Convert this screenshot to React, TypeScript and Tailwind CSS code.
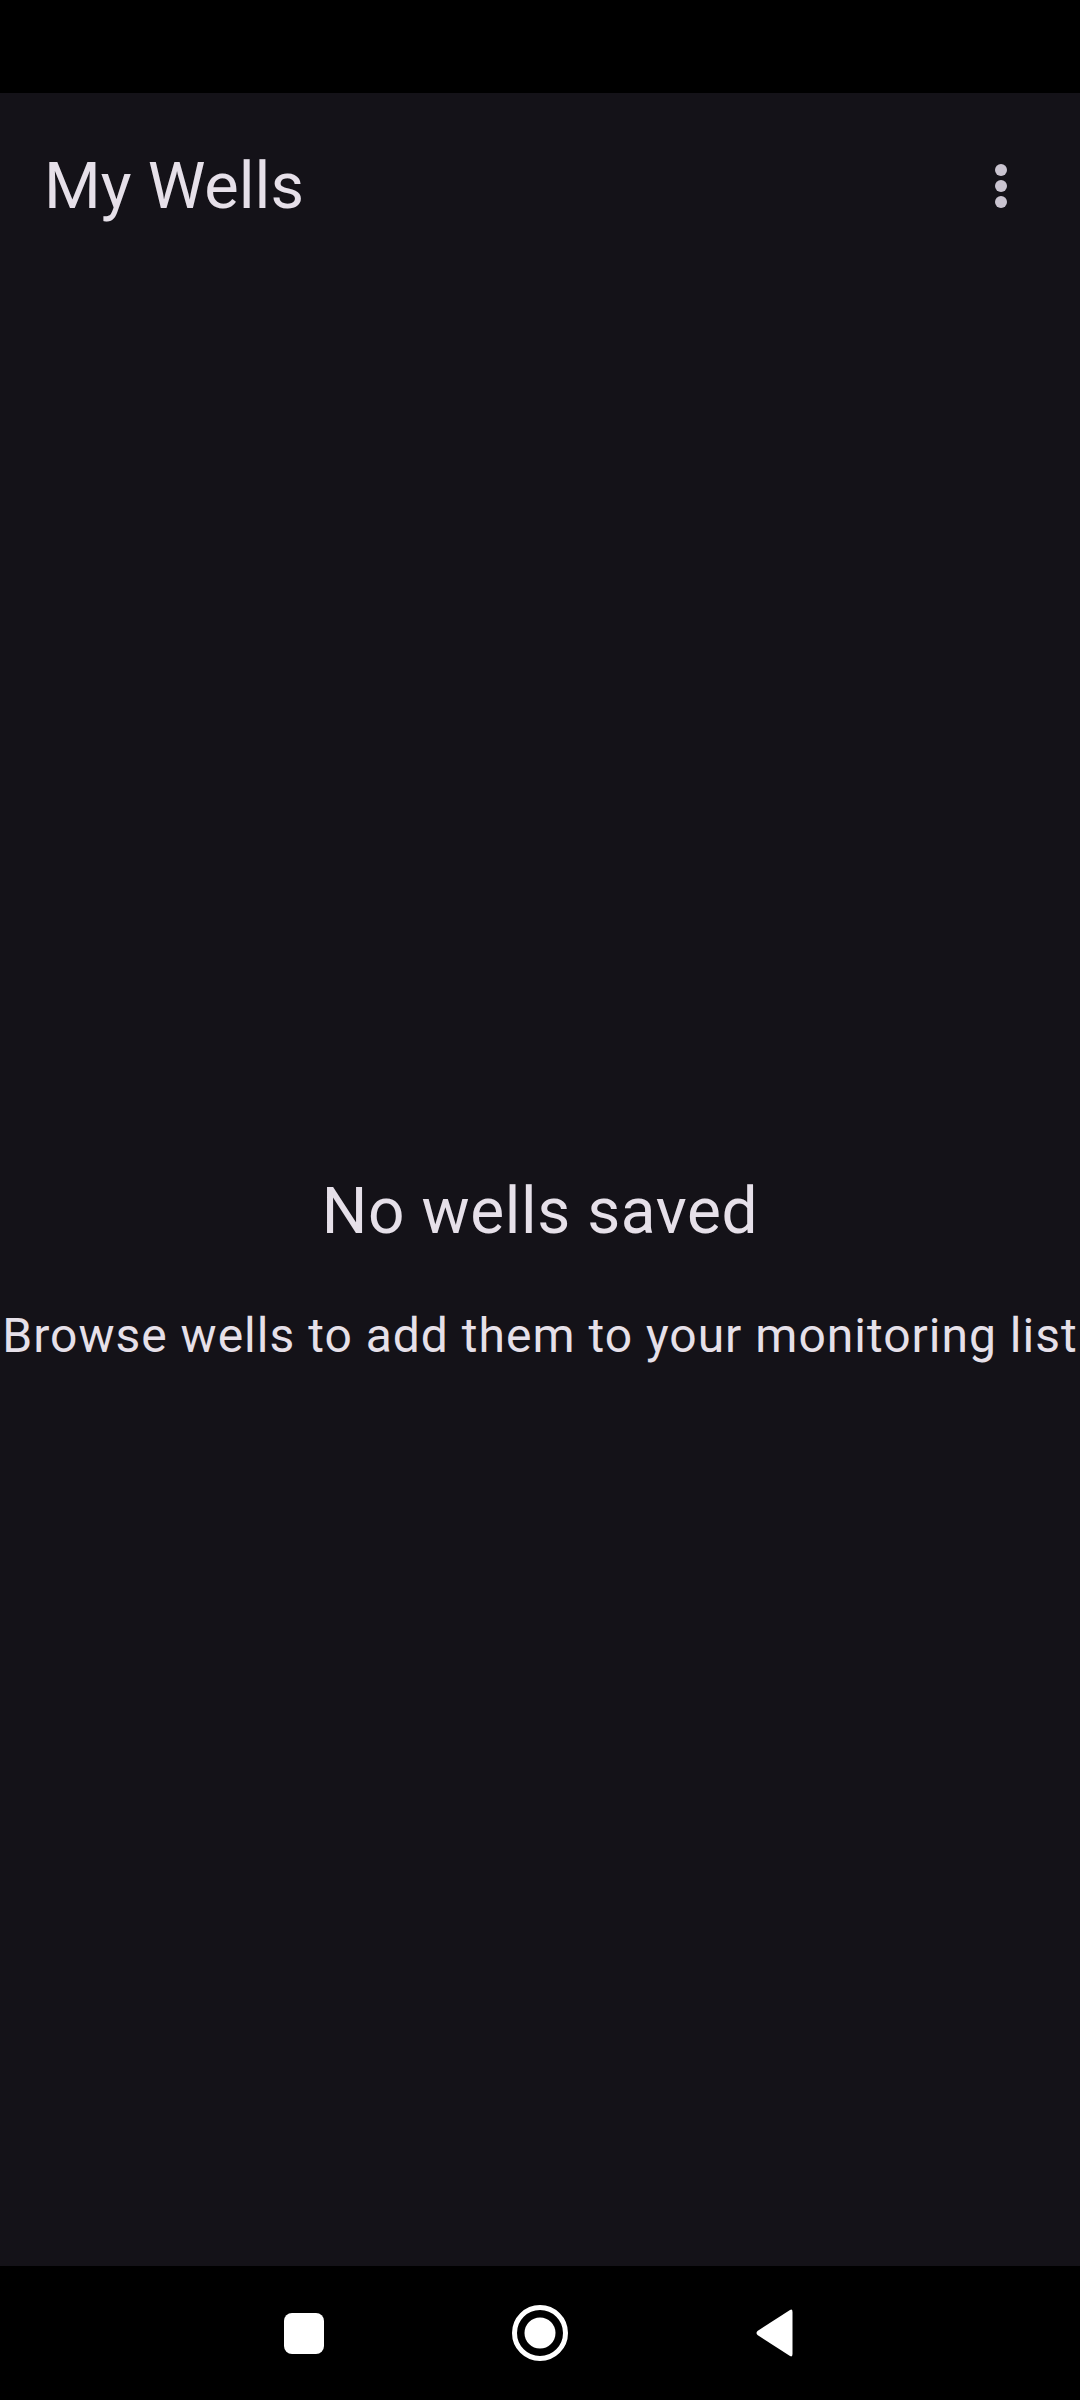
function NavBar() {
  return (
    <div className="h-[134px] bg-black flex items-center justify-center">
      <div className="flex items-center">
        {/* Recents */}
        <div className="w-[236px] flex justify-center">
          <div className="w-[40px] h-[41px] rounded-[8px] bg-white" />
        </div>
        {/* Home */}
        <div className="w-[236px] flex justify-center">
          <svg width="56" height="56" viewBox="0 0 56 56">
            <circle cx="28" cy="28" r="25.5" fill="none" stroke="#fff" strokeWidth="5" />
            <circle cx="28" cy="28" r="15.5" fill="#fff" />
          </svg>
        </div>
        {/* Back */}
        <div className="w-[236px] flex justify-center">
          <svg width="40" height="50" viewBox="0 0 40 50">
            <path
              d="M34 2 L1.5 23 Q-0.5 25 1.5 27 L34 48 Q36.5 49.5 36.5 46 L36.5 4 Q36.5 0.5 34 2 Z"
              fill="#fff"
            />
          </svg>
        </div>
      </div>
    </div>
  )
}

export default function App() {
  return (
    <div
      className="h-[2400px] w-[1080px] flex flex-col bg-[#141218] text-[#e6e0e9]"
      style={{ fontFamily: 'Roboto, "Noto Sans", sans-serif' }}
    >
      {/* Status bar */}
      <div className="h-[93px] bg-black" />

      {/* Top app bar */}
      <div className="h-[176px] flex items-center justify-between pl-[44px] pr-[73px] pt-[10px]">
        <h1 className="text-[65px] leading-none font-normal tracking-[0px]">My Wells</h1>
        <div className="flex flex-col items-center gap-[4px]">
          <span className="w-[12px] h-[12px] rounded-full bg-[#cac4d0]" />
          <span className="w-[12px] h-[12px] rounded-full bg-[#cac4d0]" />
          <span className="w-[12px] h-[12px] rounded-full bg-[#cac4d0]" />
        </div>
      </div>

      {/* Empty state */}
      <div className="flex-1 flex flex-col items-center justify-center pt-[4px]">
        <h2 className="text-[64px] leading-none font-normal tracking-[0.6px]">No wells saved</h2>
        <p className="mt-[68px] text-[48px] leading-none whitespace-nowrap tracking-[1px]">
          Browse wells to add them to your monitoring list
        </p>
      </div>

      <NavBar />
    </div>
  )
}
